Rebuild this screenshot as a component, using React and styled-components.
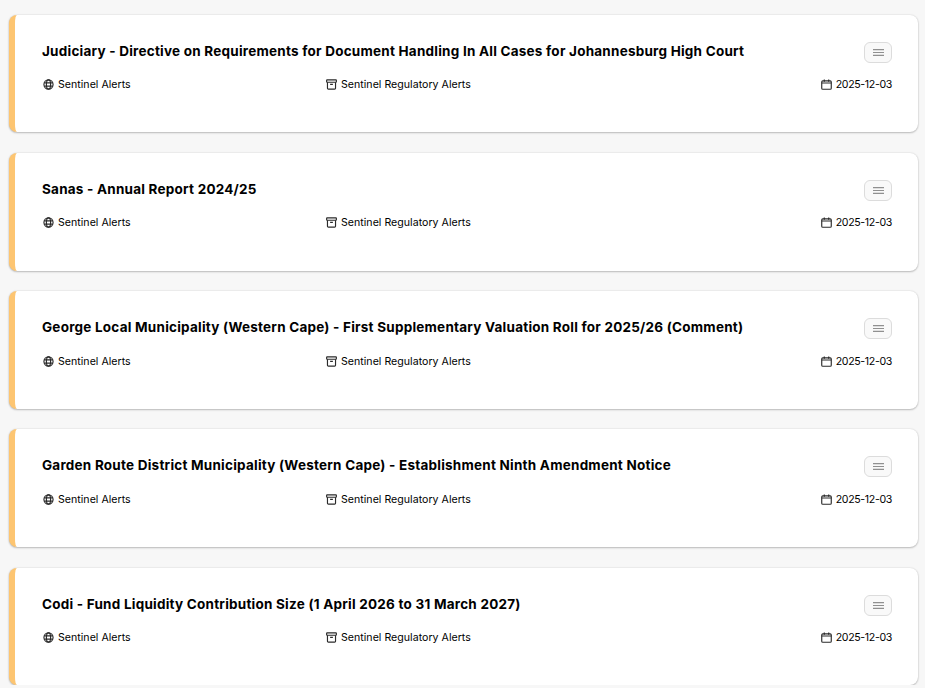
import React from "react";
import styled, { createGlobalStyle } from "styled-components";

const Global = createGlobalStyle`
  html, body { margin: 0; padding: 0; background: #f7f7f7; overflow: hidden; }
  body { font-family: "Inter", "Liberation Sans", sans-serif; color: #000; }
`;
const List = styled.div`
  display: flex;
  flex-direction: column;
  gap: 20.6px;
  padding: 14.8px 7px 0 9px;
`;
const Card = styled.article`
  height: 117.6px;
  box-sizing: border-box;
  background: #fff;
  border-radius: 8px;
  border-left: 6px solid #fdc571;
  box-shadow: 0 0 2px rgba(0, 0, 0, 0.14), 0 1px 2px rgba(0, 0, 0, 0.22);
  padding: 27px 26px 0 27px;
`;
const Head = styled.div`
  display: flex;
  justify-content: space-between;
  align-items: flex-start;
  height: 35.4px;
`;
const Title = styled.h3`
  margin: 0;
  font-size: 13.5px;
  line-height: 18px;
  font-weight: 700;
  letter-spacing: 0.23px;
`;
const MenuButton = styled.button`
  width: 28px;
  height: 21px;
  padding: 0;
  box-sizing: border-box;
  border: 1px solid #dcdcdc;
  border-radius: 6px;
  background: #f9f9f9;
  color: #909090;
  display: flex;
  align-items: center;
  justify-content: center;
`;
const Meta = styled.div`
  display: grid;
  grid-template-columns: 284px 1fr auto;
  font-size: 10.6px;
  line-height: 16px;
  letter-spacing: 0.02px;
`;
const MetaItem = styled.span`
  display: flex;
  align-items: center;
  gap: 4px;
`;
const DateText = styled.span`
  letter-spacing: -0.35px;
`;
const Icon = styled.svg`
  width: 11px;
  height: 11px;
  flex: none;
  margin-bottom: 1px;
  margin-left: ${(p) => p.$inset || 0}px;
  fill: none;
  stroke: #2a2a2a;
  stroke-width: 1.25;
`;

const Globe = () => (
  <Icon viewBox="0 0 12 12" $inset={1}>
    <circle cx="6" cy="6" r="5" />
    <ellipse cx="6" cy="6" rx="2.3" ry="5" />
    <path d="M1.4 4.2h9.2M1.4 7.8h9.2" />
  </Icon>
);
const Archive = () => (
  <Icon viewBox="0 0 12 12">
    <rect x="0.7" y="0.9" width="10.6" height="2.6" rx="0.5" />
    <path d="M1.6 3.5v6.5a1 1 0 0 0 1 1h6.8a1 1 0 0 0 1-1V3.5M4.5 5.8h3" />
  </Icon>
);
const Calendar = () => (
  <Icon viewBox="0 0 12 12">
    <rect x="0.8" y="2" width="10.4" height="9.2" rx="1.2" />
    <path d="M0.8 4.4h10.4M3.6 0.5v2.4M8.4 0.5v2.4" />
  </Icon>
);
const Lines = () => (
  <svg width="11" height="7" viewBox="0 0 11 7" stroke="currentColor" strokeWidth="1.2">
    <path d="M0 0.6h11M0 3.5h11M0 6.4h11" />
  </svg>
);

const titles = [
  "Judiciary - Directive on Requirements for Document Handling In All Cases for Johannesburg High Court",
  "Sanas - Annual Report 2024/25",
  "George Local Municipality (Western Cape) - First Supplementary Valuation Roll for 2025/26 (Comment)",
  "Garden Route District Municipality (Western Cape) - Establishment Ninth Amendment Notice",
  "Codi - Fund Liquidity Contribution Size (1 April 2026 to 31 March 2027)",
];

export default function App() {
  return (
    <>
      <Global />
      <List>
        {titles.map((t) => (
          <Card key={t}>
            <Head>
              <Title>{t}</Title>
              <MenuButton aria-label="Menu"><Lines /></MenuButton>
            </Head>
            <Meta>
              <MetaItem><Globe />Sentinel Alerts</MetaItem>
              <MetaItem><Archive />Sentinel Regulatory Alerts</MetaItem>
              <MetaItem><Calendar /><DateText>2025-12-03</DateText></MetaItem>
            </Meta>
          </Card>
        ))}
      </List>
    </>
  );
}
